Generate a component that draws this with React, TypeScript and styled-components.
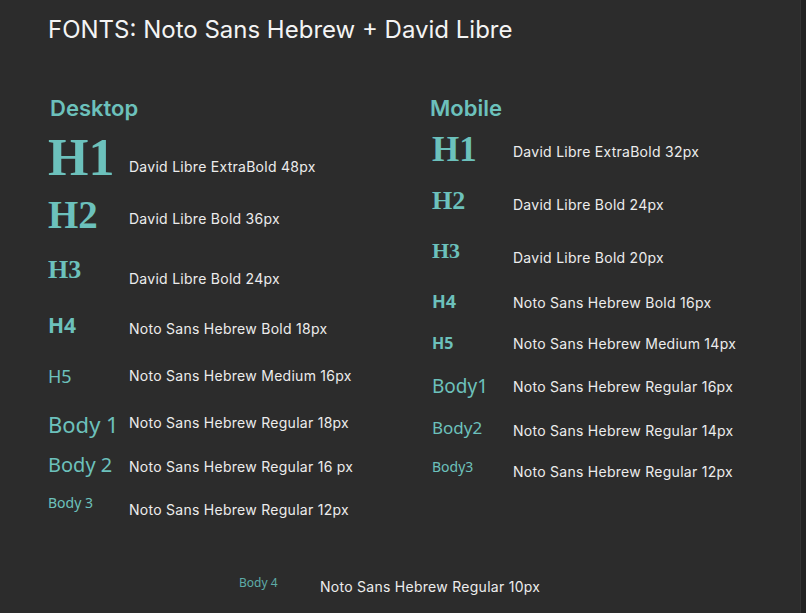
import React from 'react'
import styled, { createGlobalStyle } from 'styled-components'

const GlobalStyle = createGlobalStyle`
  html, body {
    margin: 0;
    padding: 0;
    background: #232323;
  }
  * { box-sizing: border-box; }
`

const TEAL = '#6cc1bc'

const Page = styled.div`
  width: 801px;
  min-height: 613px;
  background: #2c2c2c;
  border-right: 1px solid #343434;
  padding: 18px 0 0 48px;
  font-family: Inter, "Liberation Sans", sans-serif;
`

const Title = styled.h1`
  margin: 0;
  font-size: 24px;
  line-height: 24px;
  font-weight: 400;
  color: #f4f4f4;
`

const Columns = styled.div`
  display: grid;
  grid-template-columns: 384px 1fr;
  align-items: start;
  margin-top: 55px;
`

const Column = styled.section`
  display: flex;
  flex-direction: column;
`

const Heading = styled.h2<{ $indent: number }>`
  margin: 0 0 0 ${p => p.$indent}px;
  font-size: 22px;
  line-height: 22px;
  font-weight: 600;
  color: ${TEAL};
`

const Rows = styled.div<{ $gap: number }>`
  display: flex;
  flex-direction: column;
  margin-top: ${p => p.$gap}px;
`

const Row = styled.div<{ $h?: number }>`
  display: flex;
  align-items: flex-start;
  height: ${p => (p.$h ? `${p.$h}px` : 'auto')};
`

type Kind = 'serif' | 'sans'

const Label = styled.div<{ $kind: Kind; $size: number; $weight: number; $dim?: boolean }>`
  width: 81px;
  flex-shrink: 0;
  font-family: ${p => (p.$kind === 'serif' ? '"Liberation Serif", "DejaVu Serif", serif' : '"Noto Sans", "Open Sans", sans-serif')};
  font-size: ${p => p.$size}px;
  line-height: ${p => p.$size}px;
  font-weight: ${p => p.$weight};
  color: ${p => (p.$dim ? '#5eaca8' : TEAL)};
  white-space: nowrap;
`

const Desc = styled.div<{ $offset: number }>`
  margin-top: ${p => p.$offset}px;
  font-size: 14px;
  line-height: 17px;
  letter-spacing: 0.27px;
  color: #ececec;
  white-space: nowrap;
`

const Footer = styled.div`
  margin-top: 59px;
  padding-left: 191px;
`

type Spec = {
  label: string
  kind: Kind
  size: number
  weight: number
  desc: string
  offset: number
  h?: number
}

const DESKTOP: Spec[] = [
  { label: 'H1', kind: 'serif', size: 52, weight: 700, desc: 'David Libre ExtraBold 48px', offset: 26, h: 63 },
  { label: 'H2', kind: 'serif', size: 39, weight: 700, desc: 'David Libre Bold 36px', offset: 15, h: 62 },
  { label: 'H3', kind: 'serif', size: 26, weight: 700, desc: 'David Libre Bold 24px', offset: 13, h: 58 },
  { label: 'H4', kind: 'sans', size: 21, weight: 700, desc: 'Noto Sans Hebrew Bold 18px', offset: 5, h: 52 },
  { label: 'H5', kind: 'sans', size: 18, weight: 400, desc: 'Noto Sans Hebrew Medium 16px', offset: 0, h: 46 },
  { label: 'Body 1', kind: 'sans', size: 22, weight: 400, desc: 'Noto Sans Hebrew Regular 18px', offset: 1, h: 42 },
  { label: 'Body 2', kind: 'sans', size: 20, weight: 400, desc: 'Noto Sans Hebrew Regular 16 px', offset: 3, h: 41 },
  { label: 'Body 3', kind: 'sans', size: 14, weight: 400, desc: 'Noto Sans Hebrew Regular 12px', offset: 5, h: 22 },
]

const MOBILE: Spec[] = [
  { label: 'H1', kind: 'serif', size: 35, weight: 700, desc: 'David Libre ExtraBold 32px', offset: 11, h: 56 },
  { label: 'H2', kind: 'serif', size: 26, weight: 700, desc: 'David Libre Bold 24px', offset: 8, h: 52 },
  { label: 'H3', kind: 'serif', size: 22, weight: 700, desc: 'David Libre Bold 20px', offset: 9, h: 52 },
  { label: 'H4', kind: 'sans', size: 18, weight: 700, desc: 'Noto Sans Hebrew Bold 16px', offset: 2, h: 43 },
  { label: 'H5', kind: 'sans', size: 16, weight: 700, desc: 'Noto Sans Hebrew Medium 14px', offset: 0, h: 42 },
  { label: 'Body1', kind: 'sans', size: 19, weight: 400, desc: 'Noto Sans Hebrew Regular 16px', offset: 1, h: 42 },
  { label: 'Body2', kind: 'sans', size: 17, weight: 400, desc: 'Noto Sans Hebrew Regular 14px', offset: 3, h: 41 },
  { label: 'Body3', kind: 'sans', size: 14, weight: 400, desc: 'Noto Sans Hebrew Regular 12px', offset: 3, h: 22 },
]

const Scale: React.FC<{ title: string; indent: number; gap: number; items: Spec[] }> = ({ title, indent, gap, items }) => (
  <Column>
    <Heading $indent={indent}>{title}</Heading>
    <Rows $gap={gap}>
      {items.map(it => (
        <Row key={it.label} $h={it.h}>
          <Label $kind={it.kind} $size={it.size} $weight={it.weight}>{it.label}</Label>
          <Desc $offset={it.offset}>{it.desc}</Desc>
        </Row>
      ))}
    </Rows>
  </Column>
)

export default function App() {
  return (
    <>
      <GlobalStyle />
      <Page>
        <Title>FONTS: Noto Sans Hebrew + David Libre</Title>
        <Columns>
          <Scale title="Desktop" indent={2} gap={13} items={DESKTOP} />
          <Scale title="Mobile" indent={-2} gap={13} items={MOBILE} />
        </Columns>
        <Footer>
          <Row>
            <Label $kind="sans" $size={12} $weight={400} $dim>Body 4</Label>
            <Desc $offset={1}>Noto Sans Hebrew Regular 10px</Desc>
          </Row>
        </Footer>
      </Page>
    </>
  )
}
